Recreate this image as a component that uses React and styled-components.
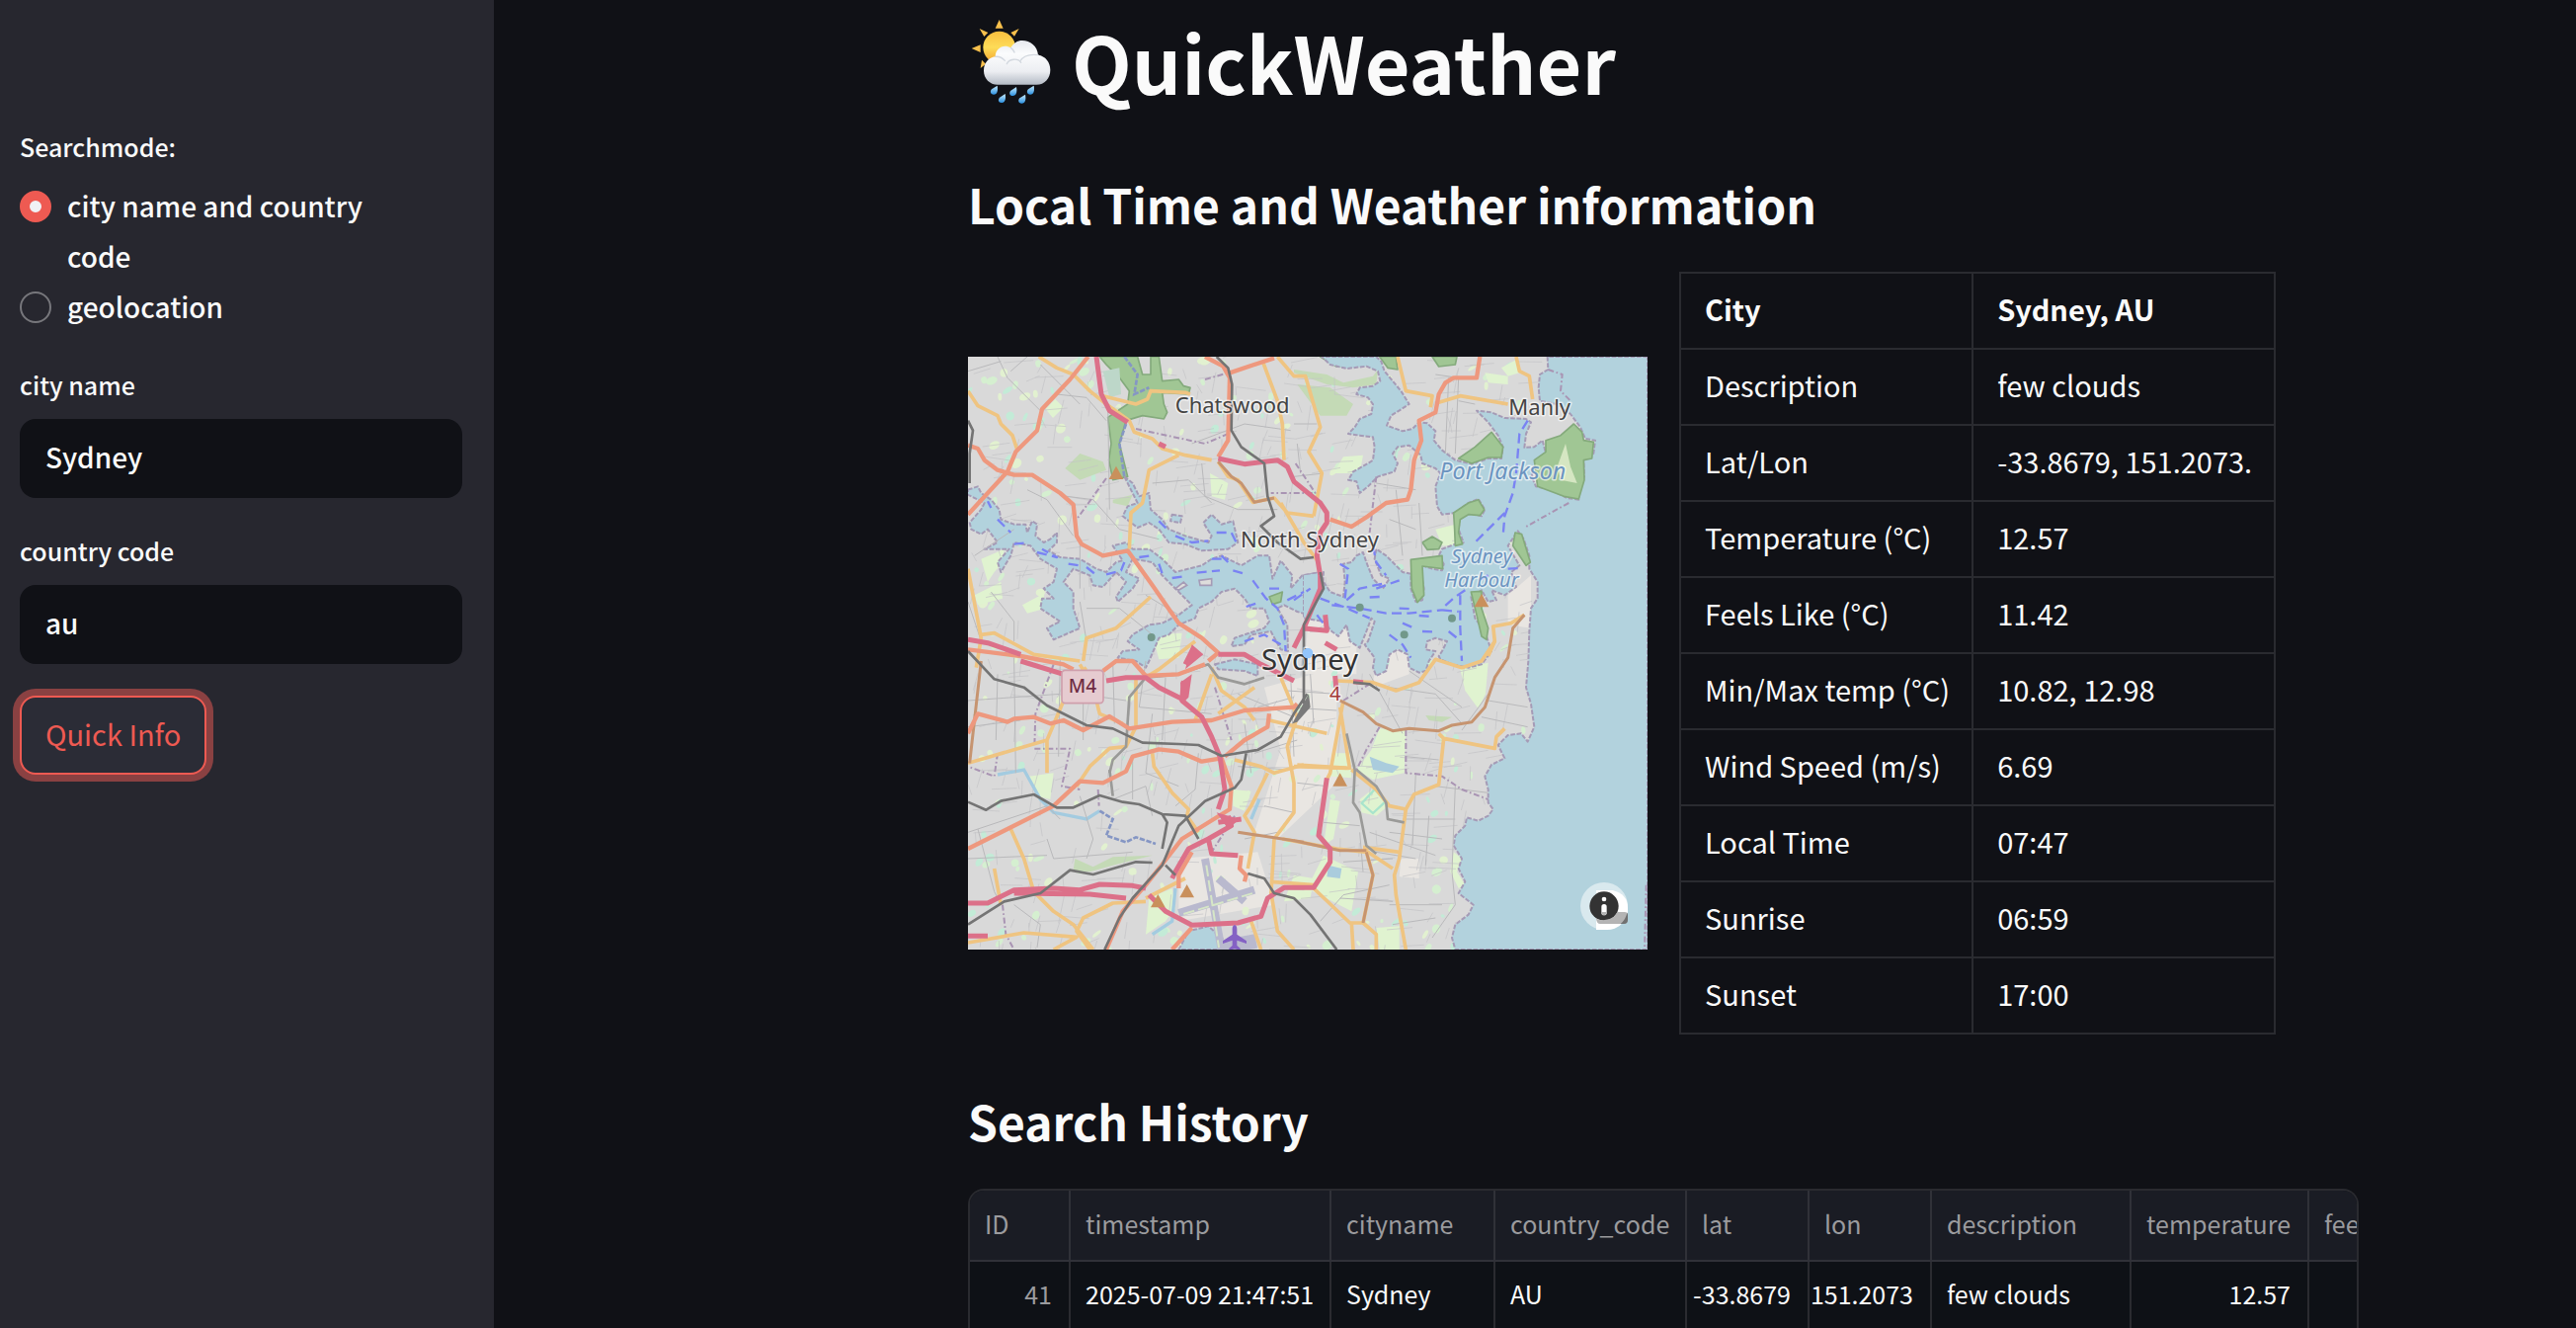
import React, { useState } from "react";
import styled, { createGlobalStyle, css } from "styled-components";

const color = {
  page: "#101116",
  panel: "#27272f",
  text: "#fafafa",
  muted: "#9b9b9e",
  line: "#2a2b30",
  accent: "#ee5a52",
};

const GlobalStyle = createGlobalStyle`
  *, *::before, *::after { box-sizing: border-box; }
  body {
    margin: 0;
    overflow: hidden;
    background: ${color.page};
    color: ${color.text};
    font-family: "Noto Sans CJK SC", "Noto Sans", sans-serif;
    font-size: 29px;
    line-height: 51px;
  }
`;

const Shell = styled.div`
  display: flex;
  height: 100vh;
  overflow: hidden;
`;

/* ---------- Sidebar ---------- */

const Sidebar = styled.aside`
  flex: 0 0 500px;
  padding: 127px 32px 32px 20px;
  background: ${color.panel};
`;

const SearchForm = styled.form`
  display: flex;
  flex-direction: column;
  align-items: stretch;
  gap: 32px;
`;

const labelText = css`
  display: block;
  padding: 0;
  margin: 0 0 14px;
  font-size: 25px;
  line-height: 42px;
  font-weight: 500;
`;

const RadioGroup = styled.fieldset`
  margin: 0;
  padding: 0 64px 0 0;
  border: 0;
  min-width: 0;
  font-size: 28px;
  font-weight: 500;
`;

const Legend = styled.legend`
  ${labelText}
`;

const RadioLabel = styled.label`
  display: flex;
  align-items: flex-start;
  gap: 16px;
`;

const Radio = styled.input`
  appearance: none;
  flex: none;
  width: 32px;
  height: 32px;
  margin: 10px 0 0;
  border: 2px solid #77777c;
  border-radius: 50%;
  &:checked {
    border: 10px solid ${color.accent};
    background: #f0f2f6;
  }
`;

const FieldLabel = styled.label`
  ${labelText}
`;

const TextInput = styled.input`
  display: block;
  width: 100%;
  height: 80px;
  padding: 0 26px 4px;
  border: 0;
  border-radius: 16px;
  outline: none;
  background: ${color.page};
  color: ${color.text};
  font: inherit;
  font-size: 28px;
  font-weight: 500;
`;

const SubmitButton = styled.button`
  align-self: flex-start;
  height: 80px;
  padding: 0 24px 4px;
  border: 2px solid ${color.accent};
  border-radius: 16px;
  background: #2b2c36;
  box-shadow: 0 0 0 7px #8a4142;
  color: ${color.accent};
  font: inherit;
`;

/* ---------- Main column ---------- */

const Main = styled.main`
  flex: 1;
  min-width: 0;
  padding: 9px 220px 0 480px;
  overflow: hidden;
`;

const Title = styled.h1`
  display: flex;
  align-items: center;
  gap: 17px;
  margin: 0 0 57px;
  font-size: 79px;
  line-height: 106px;
  font-weight: 700;
`;

const SectionTitle = styled.h2`
  margin: 0 0 35px;
  font-size: 48px;
  line-height: 68px;
  font-weight: 700;
`;

const Columns = styled.div`
  display: grid;
  grid-template-columns: 1fr 1fr;
  gap: 32px;
  align-items: center;
  margin-bottom: 53px;
`;

const InfoTable = styled.table`
  border-collapse: collapse;
  justify-self: start;
  th,
  td {
    padding: 10px 22px 14px 24px;
    border: 2px solid ${color.line};
    text-align: left;
    white-space: nowrap;
    font-weight: 400;
  }
  thead th {
    font-weight: 700;
  }
`;

const HistoryFrame = styled.div`
  overflow: hidden;
  border: 2px solid ${color.line};
  border-bottom: 0;
  border-radius: 16px 16px 0 0;
`;

const HistoryTable = styled.table`
  table-layout: fixed;
  width: 1536px;
  border-collapse: separate;
  border-spacing: 0;
  font-size: 25px;
  line-height: 40px;
`;

const HeadCell = styled.th`
  height: 72px;
  padding: 0 0 4px 15px;
  border-right: 2px solid #303138;
  border-bottom: 2px solid #303138;
  background: #1a1c24;
  color: ${color.muted};
  font-weight: 400;
  text-align: left;
`;

const Cell = styled.td`
  height: 72px;
  padding: ${(p) => (p.$numeric ? "0 17px 8px 0" : "0 0 8px 15px")};
  border-right: 2px solid ${color.line};
  background: #0e1116;
  color: ${(p) => (p.$muted ? color.muted : color.text)};
  text-align: ${(p) => (p.$numeric ? "right" : "left")};
  white-space: nowrap;
`;

/* ---------- Map ---------- */

const MapPanel = styled.div`
  position: relative;
  height: 600px;
  overflow: hidden;
`;

const MapSvg = styled.svg`
  display: block;
  width: 100%;
  height: 100%;
`;

const AttributionButton = styled.button`
  position: absolute;
  right: 20px;
  bottom: 20px;
  width: 48px;
  height: 48px;
  padding: 0;
  border: 0;
  border-radius: 50%;
  background: none;
  svg {
    display: block;
  }
`;

const OCEAN =
  "M2124,36L1820,36 1822,75 1797,90 1793,130 1797,170 1850,180 1890,210 1920,250 1935,285 1965,290 1960,330 1930,350 1932,400 1915,440 1915,470 1880,465 1830,440 1785,430 1772,400 1785,350 1815,330 1805,290 1780,310 1750,312 1755,270 1770,235 1755,225 1690,222 1650,205 1605,200 1640,235 1670,275 1685,310 1680,345 1640,345 1590,362 1540,350 1500,320 1475,290 1480,262 1455,238 1430,235 1410,255 1380,262 1332,245 1345,215 1400,180 1375,140 1350,110 1325,80 1315,50 1300,36 1135,36 1160,60 1210,72 1270,65 1305,80 1312,110 1290,125 1250,130 1240,150 1275,160 1290,180 1285,210 1250,225 1235,250 1215,270 1250,275 1290,280 1295,310 1290,350 1275,360 1230,385 1215,410 1240,415 1250,450 1275,430 1305,400 1355,385 1365,360 1350,330 1365,310 1400,305 1435,335 1440,360 1480,375 1495,390 1480,430 1485,490 1500,515 1540,510 1580,480 1610,468 1630,500 1620,520 1580,510 1555,520 1550,560 1565,600 1540,605 1500,620 1490,640 1505,665 1500,685 1470,680 1440,670 1435,690 1445,740 1440,775 1420,780 1405,740 1405,695 1380,690 1350,660 1330,640 1300,620 1295,650 1315,700 1340,710 1320,740 1290,710 1270,660 1260,630 1240,640 1225,660 1200,665 1205,720 1200,765 1160,750 1140,720 1130,690 1080,700 1080,830 1140,840 1165,870 1185,885 1210,850 1220,900 1250,920 1270,870 1285,830 1295,840 1275,900 1265,910 1295,950 1290,980 1300,1005 1330,990 1340,940 1365,925 1395,940 1400,980 1430,995 1450,990 1460,960 1480,930 1450,925 1455,900 1480,890 1515,900 1500,930 1490,945 1495,955 1530,970 1580,980 1620,970 1650,930 1640,900 1630,870 1600,830 1588,765 1620,745 1640,780 1665,775 1650,745 1690,760 1725,735 1710,690 1735,670 1700,610 1730,565 1748,590 1765,640 1765,680 1790,720 1790,770 1770,800 1765,870 1762,960 1755,1040 1770,1090 1780,1160 1760,1205 1740,1180 1700,1185 1670,1215 1690,1255 1650,1275 1630,1310 1640,1350 1640,1390 1655,1410 1640,1430 1610,1445 1575,1435 1570,1460 1540,1490 1535,1520 1560,1560 1550,1590 1570,1630 1550,1665 1595,1700 1580,1730 1540,1760 1530,1800 1540,1836 2124,1836Z";

const WATERS = [
  "M60,440L90,430 100,450 130,470 155,500 160,530 200,545 235,545 240,570 255,535 270,545 265,580 290,600 310,590 330,570 330,600 305,625 340,645 400,650 450,680 480,690 510,660 530,655 500,610 540,600 560,620 610,620 650,650 690,690 770,670 800,650 830,640 890,670 940,640 975,640 985,710 1010,655 1045,700 1040,740 1075,700 1140,690 1130,830 1060,810 1020,790 1000,800 1030,850 1032,930 1010,925 980,870 920,880 900,910 860,915 870,890 960,860 975,840 960,800 920,800 900,770 870,740 830,750 800,780 760,800 750,830 700,850 670,880 640,890 610,960 600,980 570,960 515,950 530,930 580,925 545,900 560,880 610,850 650,845 700,820 740,790 710,760 680,730 650,700 620,660 560,650 540,690 580,710 560,740 515,780 510,765 540,720 510,690 470,735 440,730 430,700 380,680 350,720 380,750 380,800 400,860 320,895 300,860 340,840 280,800 285,770 320,770 290,740 320,720 330,680 280,650 250,610 200,600 190,640 160,690 150,660 185,620 110,620 150,600 120,560 100,575 70,560 65,540 100,500 110,480 60,455Z",
  "M535,400L560,420 580,460 610,450 615,500 650,530 670,560 720,580 790,600 800,580 775,540 800,515 830,545 865,535 880,600 850,620 770,625 720,605 670,600 640,560 610,540 575,555 530,520 545,490 575,480Z",
  "M680,515L710,520 705,540 675,535Z",
  "M700,1836L730,1780 790,1765 870,1836Z",
  "M810,970L870,955 940,970 940,1005 900,990 820,985Z",
];

const FOREST = [
  "M460,36L575,36 590,90 615,90 615,36 640,36 650,110 700,105 715,125 735,130 730,150 650,145 655,180 665,205 655,225 590,215 540,230 520,300 545,400 500,410 488,350 495,300 485,220 545,180 550,140 520,100 480,60Z",
  "M1310,36L1360,36 1365,75 1335,70Z",
  "M1130,36L1270,36 1260,60 1180,66Z",
  "M1470,36L1545,36 1540,60 1490,66Z",
  "M1650,265L1685,310 1680,342 1640,342 1590,360 1550,345 1600,310Z",
  "M1900,240L1925,265 1930,290 1960,295 1955,345 1930,350 1932,410 1915,468 1870,460 1790,430 1780,350 1815,325 1815,290 1860,275Z",
  "M1535,510L1580,480 1610,470 1628,500 1615,518 1580,515 1555,530 1550,570 1562,605 1540,610 1538,560Z",
  "M1440,600L1470,582 1500,600 1490,620 1455,622Z",
  "M1405,652L1500,640 1502,680 1440,672 1445,760 1425,782 1408,740Z",
  "M1722,570L1742,575 1768,660 1755,670 1715,610Z",
  "M1588,750L1620,748 1620,800 1640,860 1635,895 1620,885 1605,820Z",
  "M975,765L1015,750 1010,780 985,788Z",
];

const SOFT_PARK = [
  "M355,375L400,330 470,355 480,380 400,410Z",
  "M1050,75L1150,90 1200,115 1290,95 1305,75 1300,120 1230,130 1150,120 1050,85Z",
  "M1060,120L1160,130 1230,180 1210,215 1130,215Z",
  "M500,470L560,455 545,490 500,480Z",
  "M385,1560L440,1585 500,1555 620,1550 500,1580 430,1600 380,1595Z",
  "M1450,1125L1530,1130 1500,1145 1460,1140Z",
];

const LIGHT_PARK = [
  "M100,650L170,620 165,660 140,690 120,720Z",
  "M80,760L160,720 165,770 90,790Z",
  "M225,790L290,755 295,800 240,815Z",
  "M296,195L325,165 350,190 318,222Z",
  "M620,880L710,875 700,950 640,955Z",
  "M795,390L850,420 840,470 800,460Z",
  "M1630,85L1700,95 1700,120 1640,115Z",
  "M1680,70L1725,45 1735,85 1700,95Z",
  "M1200,340L1260,335 1250,390 1170,390Z",
  "M1480,560L1540,545 1545,610 1500,610Z",
  "M1555,985L1640,965 1632,1060 1610,1105 1570,1050Z",
  "M1310,1165L1390,1170 1385,1300 1290,1320 1240,1290 1285,1230Z",
  "M1165,1240L1220,1240 1225,1315 1160,1310Z",
  "M1250,1380L1300,1340 1335,1400 1300,1430 1255,1420Z",
  "M1160,1380L1190,1385 1170,1500 1140,1520Z",
  "M1140,1550L1245,1600 1225,1720 1090,1650Z",
  "M1300,1770L1370,1765 1370,1836 1310,1836Z",
  "M865,1350L920,1355 900,1415 865,1400Z",
  "M245,1310L320,1300 310,1380 270,1370Z",
  "M610,1680L680,1650 690,1710 660,1750 600,1790Z",
  "M1050,1610L1110,1620 1100,1680 1020,1690Z",
  "M1535,1540L1560,1560 1545,1600 1570,1640 1550,1650 1525,1600Z",
];

const ROADS = {
  minor: [
    "M150,36L180,100 280,200M190,80L240,36M280,60L400,180M60,80L160,50M330,150L420,160 480,230",
    "M485,180L490,500M360,460L440,470 520,560 640,590M240,440L300,470 380,580",
    "M740,300L900,240 1040,260M770,360L780,460 880,500 1000,500M620,420L730,410 800,480",
    "M400,590L400,740M400,780L420,900M420,800L520,800 620,880M600,760L700,820",
    "M80,640L200,560M100,900L60,780M130,750L200,840 200,900",
    "M1480,90L1550,100 1540,330M1520,100L1510,330M1550,170L1600,180",
    "M1300,420L1420,440M1360,440L1380,640M1430,480L1440,640M1340,530L1420,560",
    "M1050,240L1120,240M1050,400L1140,390M1060,300L1070,390",
    "M150,1000L145,1200M200,950L205,1300M60,1080L340,1060M60,1160L220,1140",
    "M340,950L335,1250M400,1060L540,1080M410,1000L410,1200M500,960L505,1150",
    "M90,1470L140,1660 160,1700M60,1480L300,1400 340,1440M300,1500L320,1560 560,1540M400,1370L440,1500 420,1560",
    "M60,1560L300,1550M200,1700L280,1760 270,1830M560,1260L560,1380M500,1380L600,1340 620,1430",
    "M600,960L580,1100 800,1120M660,1010L650,1200M620,1120L600,1300 700,1340M760,1240L750,1350 690,1400",
    "M1030,1050L1180,1060M1020,1100L1180,1110M1040,1000L1050,1250M1100,1000L1110,1150M940,1100L1050,1070",
    "M880,1060L1050,1130M900,1150L920,1300M930,1240L1060,1200M1280,1000L1380,1180M1400,990L1560,1100",
    "M1340,1040L1480,1060 1560,1150M1560,1170L1640,1060M1620,1130L1760,1160M1640,1080L1760,1100",
    "M1420,1300L1410,1520M1390,1250L1490,1260M1380,1440L1540,1440M1340,1480L1500,1500M1460,1430L1450,1580",
    "M1540,1340L1530,1600 1540,1700 1470,1800M1480,1340L1640,1360M1280,1480L1480,1550M1300,1540L1420,1560",
    "M1340,1700L1500,1700M1350,1760L1480,1740M1190,1680L1350,1690M1130,1750L1200,1670 1340,1640",
    "M1250,1480L1260,1600M1200,1570L1350,1560M1140,1450L1250,1460M1060,1330L1150,1340",
    "M960,1400L1050,1420M900,1500L1000,1480M880,1280L1040,1290",
  ],
  boundary: [
    "M570,255L780,300 850,270M780,105L850,85M480,405L390,530M1055,360L1115,450 980,450M1300,400L1280,570",
    "M320,970L265,1120 262,1220M262,1226L370,1226 345,1340 400,1350M150,1240L140,1310 60,1280M455,1350L458,1400",
    "M810,1040L860,1200M870,1430L800,1540M165,1700L175,1790 200,1836",
    "M1310,1160L1270,1230 1240,1290M1390,1170L1390,1300 1500,1310 1560,1350 1640,1380M1200,1080L1280,1030",
    "M1885,480L1830,510 1750,555M1822,75L1865,90 1860,140 1890,170M2120,1640L2115,1836",
  ],
  primary: [
    "M275,36L330,70 380,90 430,140 480,180 550,230 565,265 620,285 650,315 720,335 800,350",
    "M60,140L90,185 150,215 160,240 195,275 210,320",
    "M470,155L570,180 605,165 615,140 720,145 735,150",
    "M700,335L610,380 600,430 590,480 555,510 550,620",
    "M820,355L850,400 880,410 925,478 990,465 1030,510 1110,520M1010,480L1080,600 1125,660",
    "M955,50L1000,170 1015,240 1020,350M1000,36L1050,95 1085,95 1130,250 1095,325 1135,390 1110,520",
    "M60,680L100,890 85,980M100,880L140,875 260,940 400,960M615,765L510,860 420,890 410,960",
    "M750,900L640,985 600,1010",
    "M1365,36L1390,140 1470,155 1465,190M1490,175L1555,155 1700,180",
    "M1725,36L1735,80 1765,95 1775,165",
    "M1750,820L1710,845 1655,855 1660,900 1640,945",
    "M400,970L440,1040 460,1120 530,1150M420,980L380,1010 300,1200 300,1300M60,1270L300,1200",
    "M570,1010L570,1160 540,1220 490,1225 430,1280 390,1340M620,1240L625,1280 680,1360 730,1410 725,1430 760,1480",
    "M800,980L830,1050 900,1100 930,1140M800,1000L750,1140M820,1120L930,1040",
    "M1010,1010L1060,1130 1030,1220 1050,1330 1050,1420 990,1500 980,1680",
    "M870,1260L950,1280 990,1300 1080,1275M970,1300L920,1400 900,1430 930,1480 910,1590",
    "M975,1140L1150,1180M1060,1275L1215,1285",
    "M190,1470L230,1560 260,1660 320,1720 380,1760 440,1836M140,1590L160,1700",
    "M60,1815L230,1785 390,1798 320,1836M600,1690L500,1695 410,1740 390,1780 430,1836",
    "M600,1680L720,1620M980,1660L1000,1780 1050,1836M920,1750L950,1836M980,1630L1110,1640",
    "M1180,1020L1290,1025 1360,1050 1430,1025 1480,955 1560,980 1620,960 1660,900",
    "M1200,1080L1160,1300 1150,1320M1190,1100L1220,1290M1050,1280L1210,1285",
    "M1490,1180L1505,1195 1660,1225 1665,1190 1690,1165M1505,1195L1490,1335 1415,1365 1390,1410 1370,1560 1355,1610 1360,1670 1390,1836",
    "M1225,1290L1300,1350 1340,1400 1390,1410M1260,1525L1370,1540M1260,1530L1350,1590",
    "M1110,1650L1220,1755 1260,1755 1300,1790 1300,1836M1225,1755L1230,1836",
    "M1015,1500L1180,1530 1270,1540 1290,1610 1260,1755",
  ],
  brown: [
    "M1750,820L1715,860 1700,950 1660,1010 1630,1100 1590,1145 1530,1155 1490,1172 1400,1165 1350,1172 1300,1150 1260,1115 1190,1080",
    "M1050,1505L1190,1535 1270,1535M880,1480L1080,1510M820,355L860,400 890,420 930,478 990,465",
    "M100,960L65,1270M1270,1540L1290,1610 1260,1755",
  ],
  trunk: [
    "M425,36L370,105 285,195 270,260 205,325 180,385 60,515",
    "M60,305L90,315 110,350 150,380 200,395 255,395 340,450 380,485 390,580 405,605 470,640 545,625 620,730 700,845 770,890 820,935 790,960",
    "M780,36L835,65 855,100 850,290 820,340M855,85L990,40",
    "M1615,36L1605,100 1535,100 1510,115 1490,150 1480,205 1430,230 1437,290 1415,350 1405,440 1395,470 1330,480 1275,520 1225,552 1160,530",
    "M60,925L220,945 350,970 380,985M470,990L510,960 560,960 600,1005 700,1000 780,970",
    "M60,1180L90,1120 180,1145 200,1135 260,1130 310,1150 350,1140 410,1170 490,1128 550,1165 680,1145 800,1140 900,1110 1050,1100 1060,1090",
    "M60,1530L320,1400 400,1325 470,1330 540,1295 560,1250 640,1228 700,1235 770,1265 830,1255 860,1340 855,1410 710,1500 640,1590 600,1640 530,1720 480,1836",
    "M975,1120L970,1160 900,1200 840,1250M740,1540L700,1610 700,1650M890,1550L885,1590 905,1610 900,1630M680,1836L740,1770",
  ],
  motorway: [
    "M450,36L465,150 490,200 545,235M640,300L660,310M820,345L900,362 1000,350 1030,370 1050,415 1130,480 1150,510 1150,540 1130,570 1120,640 1130,700",
    "M60,895L120,905 220,940M220,960L350,1000M480,1020L540,1010 600,1010 640,1040 720,1080",
    "M60,1795L120,1795M1130,700L1130,740 1080,860 1050,920M1075,860L1150,868 1145,820M1145,905L1180,925",
    "M820,940L900,940 950,970 1050,1020M745,920L720,970M715,1020L710,1080 770,1130 800,1190 825,1250 840,1350 820,1410",
    "M850,1430L860,1460 790,1500 730,1530 690,1600 680,1620M790,1500L800,1545 880,1550M890,1440L820,1450",
    "M60,1695L120,1695 200,1655 320,1650 400,1655 460,1638 560,1642 600,1650M200,1665L430,1668 540,1680",
    "M610,1670L660,1720 740,1762 880,1755 950,1735 970,1680 1020,1648 1110,1648 1160,1570 1160,1530 1125,1490 1150,1315",
    "M1175,1005L1178,1040M1230,1022L1260,1025",
  ],
  rail: [
    "M60,230L75,260 65,330 65,420M815,36L850,70 862,120 860,260 890,310 960,360 970,460 990,520 950,550 1000,600 1070,650 1110,645",
    "M1130,690L1140,740 1080,850 1080,1090",
    "M60,930L140,1015 230,1040 300,1095 420,1155 500,1165 590,1208 700,1212 760,1215 830,1248 940,1230 1010,1190 1050,1120 1090,1060",
    "M905,1240L890,1320 870,1345 780,1385 700,1460 650,1580 560,1680 520,1740 475,1836",
    "M60,1388L115,1412 160,1385 260,1365 330,1405 380,1405 460,1368 530,1388 580,1395 650,1425 720,1430 760,1500M650,1425L665,1450 650,1530",
    "M60,1760L170,1690 280,1665 370,1595 440,1608 570,1570 620,1572M910,1605L960,1620 990,1665 1050,1680 1100,1730 1180,1836",
    "M1230,1025L1280,1030 1310,1050M660,1580L690,1610",
  ],
  railSoft: [
    "M490,1300L500,1260 540,1220 550,1070 600,1010 700,1000 790,970 820,1010 900,1030 960,1010",
    "M1210,1180L1235,1290 1230,1390 1250,1420 1270,1520 1300,1545M1240,1290L1300,1340 1330,1390 1335,1440 1385,1450M490,1290L500,1370",
  ],
  ferry: [
    "M120,475L130,495M150,530L190,570M200,605L245,600M270,630L330,645 285,620M365,665L410,672M420,675L445,695M480,697L525,685 535,660M580,645L615,640M640,665L650,695",
    "M640,535L665,560M690,580L740,600 790,595M815,570L860,570 880,610M800,650L850,650M680,708L715,703M755,692L825,685M830,640L850,660M865,685L900,695",
    "M925,715L965,770 1000,800 1020,850 1025,930M1030,775L1080,750M975,740L1015,740M905,795L935,785M1010,910L960,880 900,900",
    "M1760,230L1735,270 1725,390 1715,450 1690,520 1685,580M1690,510L1650,550 1600,600M1700,680L1740,678M1640,700L1610,715",
    "M1570,745L1540,765 1500,800M1555,760L1555,860 1560,960M1165,790L1250,800 1330,815 1400,815 1500,805M1130,770L1200,795 1280,830M1210,775L1250,740 1320,725",
    "M1190,665L1215,680 1205,770M1290,610L1300,660 1330,700M1300,740L1370,715M1370,800L1410,802M1430,822L1470,825M1440,870L1485,872M1500,805L1550,810M1340,880L1380,910 1405,950M1310,765L1270,767M1380,845L1410,858M1520,870L1545,890",
    "M1050,775L1100,740M1120,820L1150,860",
  ],
};

const ROAD_STYLE = [
  ["minor", "#b9b9bb", 3],
  ["boundary", "#a994b3", 6, "18 8 5 8"],
  ["ferry", "#7a83f3", 7, "30 16"],
  ["primary", "#efc481", 11],
  ["brown", "#c69470", 9],
  ["railSoft", "#9a9a98", 8],
  ["trunk", "#ee987e", 13],
  ["motorway", "#dc7089", 15],
  ["rail", "#747474", 8],
];

const SUMMITS = [
  [510, 390],
  [1620, 778],
  [725, 1660],
  [637, 1690],
  [1190, 1322],
];

const ISLANDS = [
  [617, 888],
  [1385, 880],
  [1530, 830],
  [1250, 797],
];

// Seeded generator, so that the small parks and side streets stay put between renders.
function scatter(count, seed) {
  let s = seed;
  const next = () => {
    s = (s * 16807) % 2147483647;
    return s / 2147483647;
  };
  return Array.from({ length: count }, () => ({
    x: Math.round(60 + next() * 1700),
    y: Math.round(36 + next() * 1800),
    w: next(),
    h: next(),
  }));
}

const POCKETS = scatter(380, 4127);
const LANES = scatter(760, 9241);

const lanePath = LANES.map(({ x, y, w, h }) => {
  const dx = Math.round(25 + w * 65);
  const dy = Math.round((h - 0.5) * 36);
  return w > h ? `M${x},${y}l${dx},${dy}` : `M${x},${y}l${-dy},${dx}`;
}).join("");

function Label({ x, y, size = 66, fill = "#444", italic, children }) {
  return (
    <text
      x={x}
      y={y}
      fontSize={size}
      fill={fill}
      textAnchor="middle"
      fontStyle={italic ? "italic" : "normal"}
      fontFamily='"Noto Sans", "Open Sans", sans-serif'
      stroke="#ffffff"
      strokeOpacity="0.6"
      strokeWidth="9"
      strokeLinejoin="round"
      paintOrder="stroke"
    >
      {children}
    </text>
  );
}

function CityMap() {
  return (
    <MapPanel>
      <MapSvg viewBox="60 36 2064 1800" preserveAspectRatio="xMidYMid slice" role="img" aria-label="Map of Sydney">
        <rect x="60" y="36" width="2064" height="1800" fill="#d9d9d9" />
        <g fill="#e9e6e2">
          <path d="M960,1040L1180,980 1180,1330 1000,1500 930,1480 1010,1230Z" />
          <path d="M1375,1560L1430,1560 1430,1620 1370,1615Z" />
          <path d="M700,1560L940,1540 990,1700 700,1750Z" />
          <path d="M1100,760L1240,900 1240,1000 1080,1000Z" />
          <path d="M1300,930L1400,920 1400,1000 1290,1040Z" />
          <path d="M1700,760L1770,700 1770,860 1700,850Z" />
        </g>
        {POCKETS.map(({ x, y, w, h }, i) => (
          <ellipse
            key={i}
            cx={x}
            cy={y}
            rx={4 + w * 14}
            ry={4 + h * 10}
            transform={`rotate(${Math.round(w * 160)} ${x} ${y})`}
            fill={["#d5efd0", "#c3ebd7", "#e2f1d0"][i % 3]}
          />
        ))}
        <g fill="#e0f3d0">
          {LIGHT_PARK.map((d) => (
            <path key={d} d={d} />
          ))}
        </g>
        <g fill="#c4dab6">
          {SOFT_PARK.map((d) => (
            <path key={d} d={d} />
          ))}
        </g>
        <path d={lanePath} fill="none" stroke="#c3c3c5" strokeWidth="2" />
        <g fill="#a0c694" stroke="#84aa7c" strokeWidth="5" strokeLinejoin="round">
          {FOREST.slice(0, 4).map((d) => (
            <path key={d} d={d} />
          ))}
        </g>
        <path d="M470,80L520,70 525,150 490,160Z" fill="#bdd7c9" />
        <g fill="#b2d2dd" stroke="#a59bb6" strokeWidth="6" strokeDasharray="14 5" strokeLinejoin="round">
          {WATERS.map((d) => (
            <path key={d} d={d} />
          ))}
          <path d={OCEAN} />
        </g>
        <path d="M1080,700L1125,694 1120,828 1080,826Z" fill="#b2d2dd" />
        <g fill="#a0c694" stroke="#84aa7c" strokeWidth="5" strokeLinejoin="round">
          {FOREST.slice(4).map((d) => (
            <path key={d} d={d} />
          ))}
        </g>
        <path d="M1875,300L1890,370 1910,420 1860,410 1850,370Z" fill="#d5e6c2" />
        <path d="M762,715L800,710 800,730 765,730ZM690,740L715,720 725,730 700,745Z" fill="#dedddb" stroke="#a59bb6" strokeWidth="5" />
        <g fill="none" stroke="#a3cbe0" strokeWidth="10">
          <path d="M150,1305L230,1290 280,1380 320,1420 420,1440 460,1415" />
          <path d="M620,1790L680,1750 690,1650M945,1380L920,1440" />
        </g>
        <path d="M460,1415L500,1440 480,1490 540,1510 570,1495 630,1515M535,36L575,90 565,150 610,130M540,240L520,300 535,400" fill="none" stroke="#8596c4" strokeWidth="8" strokeDasharray="16 5" />
        <g stroke="#b9b9ce" strokeWidth="24" fill="none">
          <path d="M780,1560L830,1836M700,1725L930,1655M820,1620L900,1690" />
          <path d="M830,1830L935,1810" strokeWidth="44" />
        </g>
        <path d="M784,1580L822,1830M715,1728L925,1665" stroke="#d6e6c7" strokeWidth="6" strokeDasharray="34 12" fill="none" />
        <path d="M1256,1392L1295,1350 1330,1385 1290,1422Z" fill="none" stroke="#a8e4cc" strokeWidth="7" />
        <path d="M1280,1250L1330,1270 1370,1280 1350,1300 1290,1290ZM1155,1580L1195,1590 1190,1620 1150,1615Z" fill="#aaccdd" />
        {ROAD_STYLE.map(([kind, stroke, width, dash]) => (
          <g
            key={kind}
            fill="none"
            stroke={stroke}
            strokeWidth={width}
            strokeDasharray={dash}
            strokeLinejoin="round"
          >
            {ROADS[kind].map((d) => (
              <path key={d} d={d} />
            ))}
          </g>
        ))}
        <path d="M1045,1150L1095,1060 1100,1100 1060,1145Z" fill="#7a7a7a" />
        <path d="M740,910L775,940 720,985ZM705,1025L740,1000 730,1070 710,1090ZM815,1420L885,1440 850,1470Z" fill="#dc7089" />
        {ISLANDS.map(([x, y]) => (
          <circle key={x} cx={x} cy={y} r="12" fill="#72988a" />
        ))}
        {SUMMITS.map(([x, y]) => (
          <path key={x} d={`M${x},${y - 22}l22,40h-44z`} fill="#c9905c" />
        ))}
        <path d="M870,1762c6,0 7,8 7,14v14l29,20v8l-29,-10v16l10,8v6l-17,-4 -17,4v-6l10,-8v-16l-29,10v-8l29,-20v-14c0,-6 1,-14 7,-14z" fill="#8461c4" />
        <rect x="345" y="988" width="126" height="100" rx="10" fill="#e6cbd0" stroke="#cf9fac" strokeWidth="5" />
        <text
          x="408"
          y="1056"
          fontSize="57"
          fontWeight="500"
          fill="#6f2b43"
          textAnchor="middle"
          fontFamily='"Noto Sans", sans-serif'
        >
          M4
        </text>
        <Label x={863} y={208}>Chatswood</Label>
        <Label x={1796} y={212}>Manly</Label>
        <Label x={1098} y={615}>North Sydney</Label>
        <Label x={1098} y={988} size={88} fill="#333">Sydney</Label>
        <Label x={1175} y={1080} size={60} fill="#a23a36">4</Label>
        <Label x={1684} y={407} size={70} fill="#6c94c0" italic>Port Jackson</Label>
        <Label x={1620} y={662} size={60} fill="#6c94c0" italic>Sydney</Label>
        <Label x={1620} y={735} size={60} fill="#6c94c0" italic>Harbour</Label>
        <circle cx="1092" cy="936" r="16" fill="#93c5fb" />
      </MapSvg>
      <AttributionButton type="button" aria-label="Toggle attribution">
        <svg width="48" height="48" viewBox="0 0 144 144" aria-hidden="true">
          <circle cx="72" cy="72" r="72" fill="#ffffff" fillOpacity="0.5" />
          <path d="M48,144V24H98Q144,36 144,76V90Q138,126 104,140Q92,144 82,144Z" fill="#ffffff" />
          <circle cx="72" cy="72" r="44" fill="#333333" />
          <circle cx="72" cy="51" r="7" fill="#ffffff" />
          <rect x="64" y="66" width="16" height="34" rx="8" fill="#ffffff" />
          <path d="M102,104A44,44 0 0 0 112,90H134Q144,90 144,100V114Q144,126 132,126H60Q50,126 48,110Q76,122 102,104Z" fill="#b4b4b4" />
          <path d="M64,90H80V94Q78,100 72,100Q66,100 64,94Z" fill="#b4b4b4" />
          <path d="M142,92Q144,96 144,100V114Q144,126 132,126H122Q138,112 142,92Z" fill="#707070" />
        </svg>
      </AttributionButton>
    </MapPanel>
  );
}

function WeatherIcon() {
  return (
    <svg width="88" height="88" viewBox="0 0 264 264" role="img" aria-label="Sun behind rain cloud">
      <defs>
        <linearGradient id="sun" x1="0" y1="0" x2="0" y2="1">
          <stop offset="0" stopColor="#f9be3e" />
          <stop offset="0.5" stopColor="#fddc58" />
          <stop offset="1" stopColor="#f2a12c" />
        </linearGradient>
        <linearGradient id="cloud" x1="0" y1="0" x2="0" y2="1">
          <stop offset="0" stopColor="#e6e9ee" />
          <stop offset="0.3" stopColor="#fbfcfd" />
          <stop offset="0.7" stopColor="#eceef2" />
          <stop offset="1" stopColor="#b4bbc5" />
        </linearGradient>
        <linearGradient id="drop" x1="0" y1="0" x2="0" y2="1">
          <stop offset="0" stopColor="#c8ecfc" />
          <stop offset="1" stopColor="#2b90e0" />
        </linearGradient>
      </defs>
      <path
        d="M95,6L107,32H83ZM155,33L141,56 130,45ZM35,33L61,45 49,57ZM11,93L38,82V105ZM38,153L42,128 54,140Z"
        fill="#f7c04c"
      />
      <circle cx="95" cy="90" r="49" fill="url(#sun)" />
      <path
        d="M90,203C66,203 48,184 48,161C48,137 63,120 83,118C83,99 97,86 113,86C119,86 125,88 130,91C138,77 150,69 165,69C189,69 211,86 213,113C235,116 250,134 250,158C250,184 233,203 208,203Z"
        fill="url(#cloud)"
      />
      <g fill="none" stroke="#d3d8df" strokeWidth="4" strokeLinecap="round">
        <path d="M83,118C95,117 104,121 112,130" />
        <path d="M118,140C124,124 152,122 161,136" />
        <path d="M158,132C168,116 190,110 213,113" />
        <path d="M130,91C136,95 139,99 141,105" />
      </g>
      {[
        [89, 206],
        [147, 210],
        [200, 206],
        [113, 231],
        [174, 233],
      ].map(([x, y]) => (
        <path key={x} d={`M${x},${y}c3,14 0,27 -11,27c-10,0 -12,-10 -6,-16z`} fill="url(#drop)" />
      ))}
    </svg>
  );
}

/* ---------- Data ---------- */

const REPORT = [
  ["Description", "few clouds"],
  ["Lat/Lon", "-33.8679, 151.2073."],
  ["Temperature (°C)", "12.57"],
  ["Feels Like (°C)", "11.42"],
  ["Min/Max temp (°C)", "10.82, 12.98"],
  ["Wind Speed (m/s)", "6.69"],
  ["Local Time", "07:47"],
  ["Sunrise", "06:59"],
  ["Sunset", "17:00"],
];

const HISTORY_COLUMNS = [
  { name: "ID", width: 102, numeric: true, muted: true },
  { name: "timestamp", width: 264 },
  { name: "cityname", width: 166 },
  { name: "country_code", width: 194 },
  { name: "lat", width: 124, numeric: true },
  { name: "lon", width: 124, numeric: true },
  { name: "description", width: 202 },
  { name: "temperature", width: 180, numeric: true },
  { name: "feels_like", width: 180, numeric: true },
];

const HISTORY = [
  ["41", "2025-07-09 21:47:51", "Sydney", "AU", "-33.8679", "151.2073", "few clouds", "12.57", ""],
];

export default function App() {
  const [mode, setMode] = useState("city");
  const [city, setCity] = useState("Sydney");
  const [country, setCountry] = useState("au");

  return (
    <>
      <GlobalStyle />
      <Shell>
        <Sidebar>
          <SearchForm onSubmit={(e) => e.preventDefault()}>
            <RadioGroup>
              <Legend>Searchmode:</Legend>
              <RadioLabel>
                <Radio type="radio" name="mode" checked={mode === "city"} onChange={() => setMode("city")} />
                <span>city name and country code</span>
              </RadioLabel>
              <RadioLabel>
                <Radio type="radio" name="mode" checked={mode === "geo"} onChange={() => setMode("geo")} />
                <span>geolocation</span>
              </RadioLabel>
            </RadioGroup>
            <div>
              <FieldLabel htmlFor="city">city name</FieldLabel>
              <TextInput id="city" value={city} onChange={(e) => setCity(e.target.value)} />
            </div>
            <div>
              <FieldLabel htmlFor="country">country code</FieldLabel>
              <TextInput id="country" value={country} onChange={(e) => setCountry(e.target.value)} />
            </div>
            <SubmitButton type="submit">Quick Info</SubmitButton>
          </SearchForm>
        </Sidebar>
        <Main>
          <Title>
            <WeatherIcon />
            QuickWeather
          </Title>
          <SectionTitle>Local Time and Weather information</SectionTitle>
          <Columns>
            <CityMap />
            <InfoTable>
              <thead>
                <tr>
                  <th scope="col">City</th>
                  <th scope="col">Sydney, AU</th>
                </tr>
              </thead>
              <tbody>
                {REPORT.map(([name, value]) => (
                  <tr key={name}>
                    <th scope="row">{name}</th>
                    <td>{value}</td>
                  </tr>
                ))}
              </tbody>
            </InfoTable>
          </Columns>
          <SectionTitle>Search History</SectionTitle>
          <HistoryFrame>
            <HistoryTable>
              <colgroup>
                {HISTORY_COLUMNS.map((c) => (
                  <col key={c.name} style={{ width: c.width }} />
                ))}
              </colgroup>
              <thead>
                <tr>
                  {HISTORY_COLUMNS.map((c) => (
                    <HeadCell key={c.name} scope="col">
                      {c.name}
                    </HeadCell>
                  ))}
                </tr>
              </thead>
              <tbody>
                {HISTORY.map((row) => (
                  <tr key={row[0]}>
                    {row.map((value, i) => (
                      <Cell
                        key={HISTORY_COLUMNS[i].name}
                        $numeric={HISTORY_COLUMNS[i].numeric}
                        $muted={HISTORY_COLUMNS[i].muted}
                      >
                        {value}
                      </Cell>
                    ))}
                  </tr>
                ))}
              </tbody>
            </HistoryTable>
          </HistoryFrame>
        </Main>
      </Shell>
    </>
  );
}
